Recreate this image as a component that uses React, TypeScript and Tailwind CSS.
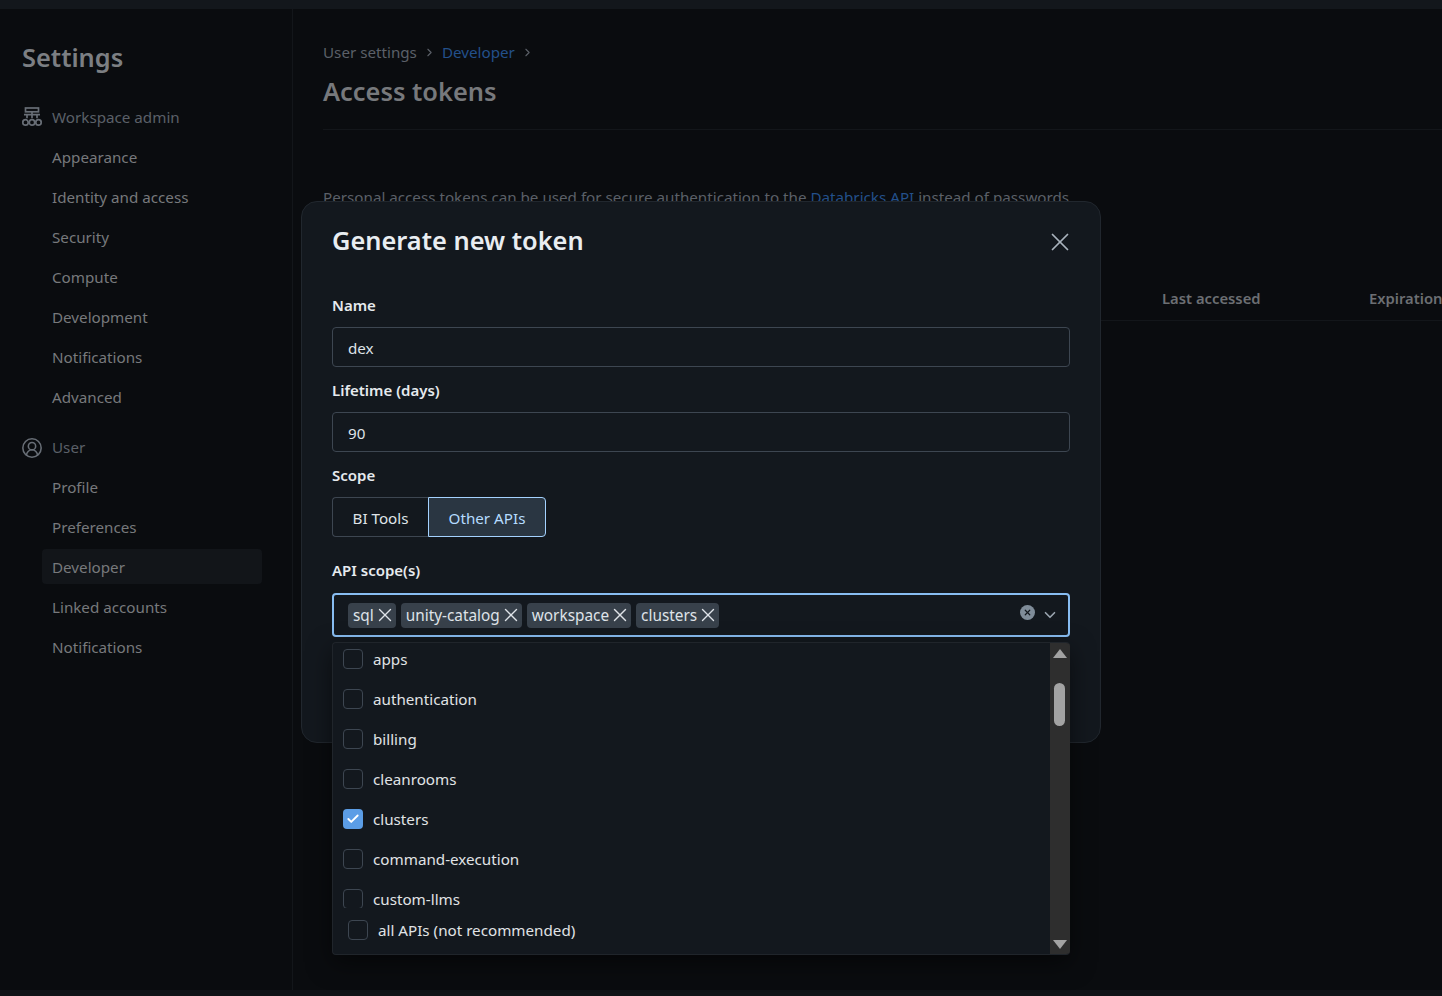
import React from "react";
import { X, ChevronDown, ChevronRight, Check, CircleUserRound } from "lucide-react";

const adminLinks = ["Appearance", "Identity and access", "Security", "Compute", "Development", "Notifications", "Advanced"];
const userLinks = ["Profile", "Preferences", "Developer", "Linked accounts", "Notifications"];
const tags = ["sql", "unity-catalog", "workspace", "clusters"];
const scopes = ["apps", "authentication", "billing", "cleanrooms", "clusters", "command-execution", "custom-llms"];

function AdminIcon() {
  return (
    <svg width="20" height="20" viewBox="0 0 20 20" fill="none" stroke="#686e76" strokeWidth="1.7">
      <rect x="3.5" y="1" width="13" height="3.8" />
      <path d="M2 7.6h16M10 4.8v6.5M5 7.6v3.7M15 7.6v3.7" />
      <circle cx="3.5" cy="15.4" r="2.7" />
      <circle cx="10" cy="15.4" r="2.7" />
      <circle cx="16.5" cy="15.4" r="2.7" />
    </svg>
  );
}

function Label({ text }: { text: string }) {
  return <div className="h-[22px] pb-[2px] flex items-center text-[15px] font-semibold text-[#e6eaee]">{text}</div>;
}

function Field({ label, value }: { label: string; value: string }) {
  return (
    <div>
      <Label text={label} />
      <div className="h-[40px] mt-[10px] mb-[13px] px-[15px] pt-[2px] flex items-center rounded border border-[#3d4651] text-[#dfe3e8]">{value}</div>
    </div>
  );
}

function Box({ checked }: { checked?: boolean }) {
  if (checked) {
    return (
      <span className="w-5 h-5 rounded bg-[#5b9de6] flex items-center justify-center">
        <Check size={14} strokeWidth={3.2} className="text-white" />
      </span>
    );
  }
  return <span className="w-5 h-5 rounded border border-[#3d4651]" />;
}

export default function App() {
  return (
    <div className="relative w-[1442px] h-[996px] overflow-hidden bg-[#0a0c0f] flex flex-col text-[15.2px] font-['Noto_Sans',sans-serif]">
      <div className="h-[9px] bg-[#13171c]" />
      <div className="flex flex-1 min-h-0">
        {/* Sidebar */}
        <aside className="w-[293px] border-r border-[#13161a] pt-[30px]">
          <h1 className="pl-[22px] h-[36px] flex items-center text-[25.4px] font-semibold text-[#7c7f83]">Settings</h1>
          <div className="mt-[22px] h-[40px] pl-[22px] flex items-center gap-[10px] text-[#5b6068]">
            <AdminIcon />
            Workspace admin
          </div>
          {adminLinks.map((l) => (
            <div key={l} className="h-[40px] pl-[52px] flex items-center text-[#77797c]">{l}</div>
          ))}
          <div className="mt-[10px] h-[41px] pl-[22px] flex items-center gap-[10px] text-[#5b6068]">
            <CircleUserRound size={22} strokeWidth={1.7} className="-mx-[1px] text-[#686e76]" />
            User
          </div>
          {userLinks.map((l) => (
            <div key={l} className="h-[40px] pl-[42px] pr-[30px] flex items-start">
              <div className={`w-full h-[35px] mt-[1px] pl-[10px] pt-[1px] flex items-center rounded text-[#77797c] ${l === "Developer" ? "bg-[#121519]" : ""}`}>{l}</div>
            </div>
          ))}
        </aside>

        {/* Page behind the dialog */}
        <main className="flex-1 min-w-0 pl-[30px] pt-[31px] overflow-hidden">
          <div className="flex items-center h-[24px] text-[#5b6068]">
            User settings
            <ChevronRight size={13} strokeWidth={2} className="mx-[6px]" />
            <span className="text-[#23508a]">Developer</span>
            <ChevronRight size={13} strokeWidth={2} className="mx-[6px]" />
          </div>
          <h2 className="mt-[7px] h-[40px] flex items-center text-[25.4px] font-semibold text-[#77797c]">Access tokens</h2>
          <div className="mt-[18px] border-t border-[#13161a]" />
          <p className="mt-[56px] whitespace-nowrap text-[#5b6068]">
            Personal access tokens can be used for secure authentication to the <span className="text-[#23508a]">Databricks API</span> instead of passwords.
          </p>
          <div className="mt-[68px] h-[44px] border-b border-[#13161a] flex items-center text-[14.8px] font-semibold text-[#6c6f73] whitespace-nowrap pl-[839px]">
            <span className="w-[207px] shrink-0">Last accessed</span>
            <span className="shrink-0">Expiration</span>
          </div>
        </main>
      </div>
      <div className="h-[6px] bg-[#101317]" />

      {/* Dialog */}
      <div className="absolute left-[301px] top-[201px] w-[800px] h-[542px] rounded-2xl bg-[#13181e] border border-[#21272e] px-[30px] text-[#e6eaee]">
        <div className="h-[76px] flex items-center justify-between">
          <h3 className="text-[25.4px] font-semibold text-[#e9edf1]">Generate new token</h3>
          <X size={30} strokeWidth={1.4} className="text-[#a9b3bd] mr-[-5px] mt-[4px]" />
        </div>
        <div className="mt-[17px]">
          <Field label="Name" value="dex" />
          <Field label="Lifetime (days)" value="90" />
        </div>
        <Label text="Scope" />
        <div className="flex h-[40px] mt-[10px]">
          <div className="w-[96px] pt-[2px] flex items-center justify-center rounded-l border border-r-0 border-[#3d4651] text-[#dfe3e8]">BI Tools</div>
          <div className="w-[118px] pt-[2px] flex items-center justify-center rounded-r border border-[#a4d2ff] bg-[#2a3642] text-[#b5dcff]">Other APIs</div>
        </div>
        <div className="mt-[23px]">
          <Label text="API scope(s)" />
        </div>
        <div className="mt-[11px] h-[44px] pl-[14px] pr-[9px] flex items-center rounded border-2 border-[#88bdf2]">
          <div className="flex-1 flex gap-[5px]">
            {tags.map((t) => (
              <span key={t} className="h-[25px] pl-[5px] flex items-center rounded bg-[#38414b] text-[15.35px] text-[#dfe3e8]">
                <span className="pt-[1px]">{t}</span>
                <X size={22} strokeWidth={1.5} />
              </span>
            ))}
          </div>
          <span className="w-[15px] h-[15px] mb-[6px] rounded-full bg-[#7f8c99] flex items-center justify-center">
            <X size={9} strokeWidth={3.2} className="text-[#13181e]" />
          </span>
          <ChevronDown size={18} strokeWidth={2.2} className="ml-[6px] text-[#9aa5b0]" />
        </div>

        {/* Scope dropdown */}
        <div className="absolute left-[30px] top-[440px] w-[738px] h-[313px] flex rounded border border-r-0 border-[#20252b] bg-[#13181e] overflow-hidden shadow-[0_8px_24px_rgba(0,0,0,0.5)]">
          <div className="flex-1 min-w-0">
            <div className="h-[265px] overflow-hidden">
              <div className="-mt-[4px]">
                {scopes.map((s) => (
                  <div key={s} className="h-[40px] pl-[10px] gap-[10px] flex items-center text-[#e0e3e6]">
                    <Box checked={s === "clusters"} />
                    {s}
                  </div>
                ))}
              </div>
            </div>
            <div className="h-[46px] pl-[15px] pb-[3px] gap-[10px] flex items-center text-[#e0e3e6]">
              <Box />
              <span className="pt-[2px]">all APIs (not recommended)</span>
            </div>
          </div>
          <div className="relative w-[20px] bg-[#2e2e2e]">
            <span className="absolute left-[3px] top-[6px] w-0 h-0 border-x-[7px] border-x-transparent border-b-[9px] border-b-[#a3a3a3]" />
            <span className="absolute left-[4px] top-[40px] w-[11px] h-[43px] rounded-full bg-[#a3a3a3]" />
            <span className="absolute left-[3px] bottom-[5px] w-0 h-0 border-x-[7px] border-x-transparent border-t-[9px] border-t-[#a3a3a3]" />
          </div>
        </div>
      </div>
    </div>
  );
}
